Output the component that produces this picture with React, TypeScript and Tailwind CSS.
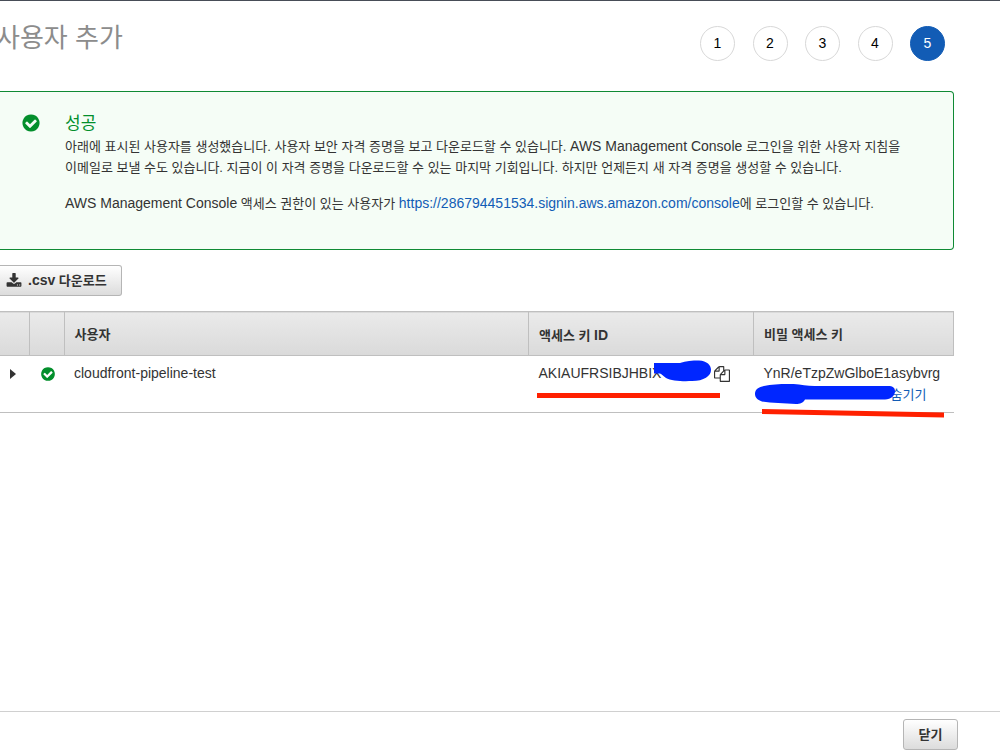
import type { ReactNode } from "react";

const steps = [1, 2, 3, 4, 5];
const currentStep = 5;

const users = [
  {
    name: "cloudfront-pipeline-test",
    accessKeyId: "AKIAUFRSIBJHBIX",
    secretKey: "YnR/eTzpZwGlboE1asybvrg",
  },
];

function Icon({ d, className }: { d: string; className: string }) {
  return (
    <svg viewBox="0 0 1792 1792" fill="currentColor" aria-hidden="true" className={className}>
      <path d={d} />
    </svg>
  );
}

const checkCircle =
  "M1412 734q0-28-18-46l-91-90q-19-19-45-19t-45 19l-408 407-226-226q-19-19-45-19t-45 19l-91 90q-18 18-18 46 0 27 18 45l362 362q19 19 45 19 27 0 46-19l543-543q18-18 18-45zm252 162q0 209-103 385.5t-279.5 279.5-385.5 103-385.5-103-279.5-279.5-103-385.5 103-385.5 279.5-279.5 385.5-103 385.5 103 279.5 279.5 103 385.5z";
const download =
  "M1344 1344q0-26-19-45t-45-19-45 19-19 45 19 45 45 19 45-19 19-45zm256 0q0-26-19-45t-45-19-45 19-19 45 19 45 45 19 45-19 19-45zm128-224v320q0 40-28 68t-68 28h-1472q-40 0-68-28t-28-68v-320q0-40 28-68t68-28h465l135 136q58 56 136 56t136-56l136-136h464q40 0 68 28t28 68zm-325-569q17 41-14 70l-448 448q-18 19-45 19t-45-19l-448-448q-31-29-14-70 17-39 59-39h256v-448q0-26 19-45t45-19h256q26 0 45 19t19 45v448h256q42 0 59 39z";
const copy =
  "M1696 384q40 0 68 28t28 68v1216q0 40-28 68t-68 28h-960q-40 0-68-28t-28-68v-288h-544q-40 0-68-28t-28-68v-672q0-40 20-88t48-76l408-408q28-28 76-48t88-20h416q40 0 68 28t28 68v328q68-40 128-40h416zm-544 213l-299 299h299v-299zm-640-384l-299 299h299v-299zm196 647l316-316v-416h-384v416q0 40-28 68t-68 28h-416v640h512v-256q0-40 20-88t48-76zm956 804v-1152h-384v416q0 40-28 68t-68 28h-416v640h896z";

// Latin runs sit one pixel larger than the Korean around them
function Latin({ children }: { children: ReactNode }) {
  return <span className="text-[14px]">{children}</span>;
}

function StepNav() {
  return (
    <ol className="flex w-[245px] justify-between">
      {steps.map((step) => (
        <li
          key={step}
          className={`flex h-[35px] w-[35px] items-center justify-center rounded-full border text-[14px] ${
            step === currentStep
              ? "border-[#125cb5] bg-[#125cb5] text-white"
              : "border-[#d8d8d8] bg-white text-black"
          }`}
        >
          {step}
        </li>
      ))}
    </ol>
  );
}

function SuccessAlert() {
  return (
    <section className="flex rounded-r-[4px] border border-l-0 border-[#0f8a34] bg-[#f5fdf6] pt-5 pr-9 pb-[35px] pl-[21px]">
      <Icon d={checkCircle} className="mt-[1px] mr-6 h-5 w-5 shrink-0 text-[#038f2c]" />
      <div className="break-keep">
        <h2 className="text-[17px] leading-6 text-[#038f2c]">성공</h2>
        <p className="leading-[21px]">
          아래에 표시된 사용자를 생성했습니다. 사용자 보안 자격 증명을 보고 다운로드할 수 있습니다.{" "}
          <Latin>AWS Management Console</Latin> 로그인을 위한 사용자 지침을 이메일로 보낼 수도 있습니다.
          지금이 이 자격 증명을 다운로드할 수 있는 마지막 기회입니다. 하지만 언제든지 새 자격 증명을
          생성할 수 있습니다.
        </p>
        <p className="mt-[15px] leading-[21px]">
          <Latin>AWS Management Console</Latin> 액세스 권한이 있는 사용자가{" "}
          <a href="https://286794451534.signin.aws.amazon.com/console" className="text-[14px] text-[#125cb5]">
            https://286794451534.signin.aws.amazon.com/console
          </a>
          에 로그인할 수 있습니다.
        </p>
      </div>
    </section>
  );
}

function UserTable() {
  return (
    <table className="w-full table-fixed border-collapse text-left">
      <colgroup>
        <col className="w-[29px]" />
        <col className="w-[35px]" />
        <col />
        <col className="w-[225px]" />
        <col className="w-[200px]" />
      </colgroup>
      <thead>
        <tr className="h-[44px] border border-l-0 border-[#bfbfbf] bg-linear-to-b from-[#eaeaea] to-[#dadada]">
          <th className="border-r border-[#bfbfbf]" />
          <th className="border-r border-[#bfbfbf]" />
          <th className="border-r border-[#bfbfbf] px-[10px] pt-[3px] font-bold">사용자</th>
          <th className="border-r border-[#bfbfbf] px-[10px] pt-[3px] font-bold">
            액세스 키 <Latin>ID</Latin>
          </th>
          <th className="px-[10px] pt-[3px] font-bold">비밀 액세스 키</th>
        </tr>
      </thead>
      <tbody>
        {users.map((user) => (
          <tr key={user.name} className="border-b border-[#bfbfbf] align-top text-[14px] leading-[21px]">
            <td className="py-[7px] pl-[10px]">
              <button aria-label="expand" className="flex h-[21px] items-center">
                <svg viewBox="0 0 6 10" className="h-[10px] w-[6px]" fill="#333">
                  <path d="M0 0L6 5L0 10Z" />
                </svg>
              </button>
            </td>
            <td className="py-[7px] pl-[11px]">
              <div className="flex h-[21px] items-center">
                <Icon d={checkCircle} className="h-4 w-4 text-[#038f2c]" />
              </div>
            </td>
            <td className="px-[10px] py-[7px]">{user.name}</td>
            <td className="relative px-[10px] py-[7px]">
              <div className="flex items-center justify-between pr-[14px]">
                {user.accessKeyId}
                <button aria-label="copy">
                  <Icon d={copy} className="h-4 w-4" />
                </button>
              </div>
              {/* pen marks over the key */}
              <svg viewBox="0 0 200 60" className="pointer-events-none absolute top-0 left-0 h-[60px] w-[200px]">
                <path
                  d="M125 7H151C157 5 163 4.500 170 4.500C178 5 182 9 182 14C182 20 175 25 163 25C154 25.500 142 25 137 22C134 20 133 18 131 17.500H125Z"
                  fill="#0026ff"
                />
                <path d="M8 37H191V42H8Z" fill="#ff2000" />
              </svg>
            </td>
            <td className="relative px-[10px] py-[7px]">
              {user.secretKey}
              <div className="pl-[127px]">
                <button className="block text-[13px] leading-[21px] text-[#125cb5]">숨기기</button>
              </div>
              <svg viewBox="0 0 200 64" className="pointer-events-none absolute top-0 left-0 h-16 w-[200px]">
                <path
                  d="M10 30C20 28 35 27.500 45 28.500C52 30 58 30 66 30H134C139 30 141 32 141 35C141 40 137 43 131 43.500H51C49 47 46 48 42 48C30 47 18 47 8 45.500C3 44 1 41 1 38C1 33 5 31 10 30Z"
                  fill="#0026ff"
                />
                <path d="M8 53L190 56.500V61.500L8 58Z" fill="#ff2000" />
              </svg>
            </td>
          </tr>
        ))}
      </tbody>
    </table>
  );
}

export default function App() {
  return (
    <div
      lang="ko"
      className="flex min-h-screen flex-col overflow-x-hidden border-t border-[#474d57] bg-white font-['Liberation_Sans','Noto_Sans_CJK_KR',sans-serif] text-[13px] text-[#333]"
    >
      <main className="flex-1 pr-[46px]">
        <header className="flex h-[90px] items-start justify-between pt-[25px] pr-[9px]">
          <h1 className="-ml-1 text-[26px] leading-6 text-[#8c8c8c]">사용자 추가</h1>
          <StepNav />
        </header>
        <SuccessAlert />
        <button className="my-[15px] flex h-[31px] items-center gap-[6px] rounded-r-[3px] border border-l-0 border-[#b5b5b5] bg-linear-to-b from-white to-[#dcdcdc] pr-[14px] pl-[6px] font-bold">
          <Icon d={download} className="h-4 w-4" />
          <span>
            <Latin>.csv</Latin> 다운로드
          </span>
        </button>
        <UserTable />
      </main>
      <footer className="flex justify-end border-t border-[#d0d0d0] pt-[7px] pr-[42px] pb-[6px]">
        <button className="h-[31px] w-[55px] rounded-[3px] border border-[#b5b5b5] bg-linear-to-b from-white to-[#dcdcdc] font-bold">
          닫기
        </button>
      </footer>
    </div>
  );
}
